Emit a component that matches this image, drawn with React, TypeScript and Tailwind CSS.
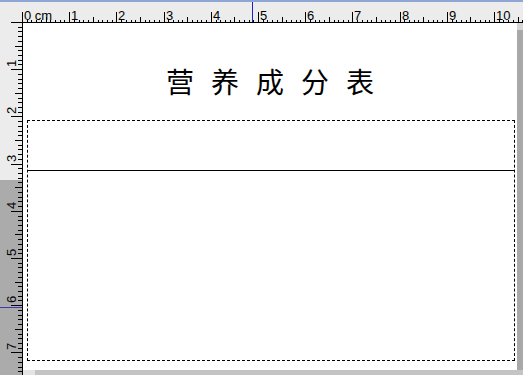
const CM = 47.2;
const STEP = CM / 10;

const TopRuler = () => {
  const ticks = [];
  for (let i = 0; i <= 107; i++) {
    const x = Math.round(22 + i * STEP) + 0.5;
    const len = i % 10 === 0 ? 11 : i % 5 === 0 ? 6 : 3;
    ticks.push(<line key={i} x1={x} x2={x} y1={21} y2={21 - len} stroke="#000" />);
  }
  const labels = [];
  for (let n = 0; n <= 10; n++) {
    const x = Math.round(22 + n * CM) + 2;
    labels.push(
      <text key={n} x={x} y={18} fontSize={13} fill="#000">
        {n === 0 ? "0 cm" : n}
      </text>
    );
  }
  return (
    <svg width={523} height={21} className="block shrink-0" shapeRendering="crispEdges">
      <line x1={11} x2={523} y1={20.5} y2={20.5} stroke="#000" />
      {ticks}
      {labels}
      <line x1={252.5} x2={252.5} y1={0} y2={20} stroke="#2020c8" />
    </svg>
  );
};

const LeftRuler = () => {
  const ticks = [];
  for (let i = 1; i <= 75; i++) {
    const y = Math.round(22 + i * STEP) - 23 + 0.5;
    const len = i % 10 === 0 ? 11 : i % 5 === 0 ? 7 : 4;
    ticks.push(<line key={i} x1={22} x2={22 - len} y1={y} y2={y} stroke="#000" />);
  }
  const labels = [];
  for (let n = 1; n <= 7; n++) {
    const y = Math.round(22 + n * CM) - 23 - 2;
    labels.push(
      <text key={n} x={16} y={y} fontSize={13} fill="#000" transform={`rotate(-90 16 ${y})`}>
        {n}
      </text>
    );
  }
  return (
    <svg width={23} height={352} className="block shrink-0" shapeRendering="crispEdges">
      <rect x={0} y={157} width={22} height={195} fill="#ababab" />
      <line x1={22.5} x2={22.5} y1={0} y2={352} stroke="#000" />
      {ticks}
      {labels}
      <line x1={0} x2={22} y1={284.5} y2={284.5} stroke="#3a3ab4" />
    </svg>
  );
};

const TITLE = ["营", "养", "成", "分", "表"];

export default function App() {
  return (
    <div className="flex h-[375px] w-[523px] flex-col overflow-hidden bg-[#ececec] font-['Liberation_Sans',sans-serif]">
      <div className="h-[2px] shrink-0 bg-[#8ea6d3]" />
      <TopRuler />
      <div className="flex min-h-0 flex-1">
        <LeftRuler />
        <div className="flex min-w-0 flex-1 flex-col">
          <div className="flex min-h-0 flex-1">
            <main className="flex flex-1 flex-col bg-white pb-[9px] pl-[4px] pr-[2px]">
              <div className="flex h-[97px] shrink-0 justify-center gap-[17px] pr-[2px] pt-[44px] font-['Noto_Sans_CJK_SC',sans-serif] text-[28px] leading-[28px] text-black">
                {TITLE.map((c) => (
                  <span key={c}>{c}</span>
                ))}
              </div>
              <div className="flex-1 border border-dashed border-black">
                <div className="h-[50px] border-b border-black" />
              </div>
            </main>
            <div className="flex w-[6px] flex-col">
              <div className="h-[7px] bg-[#d6d6d6]" />
              <div className="flex-1 bg-[#a8a8a8]" />
            </div>
          </div>
          <div className="flex h-[5px] shrink-0">
            <div className="w-[12px] bg-[#e4e4e4]" />
            <div className="flex-1 bg-[#c4c4c4]" />
          </div>
        </div>
      </div>
    </div>
  );
}
